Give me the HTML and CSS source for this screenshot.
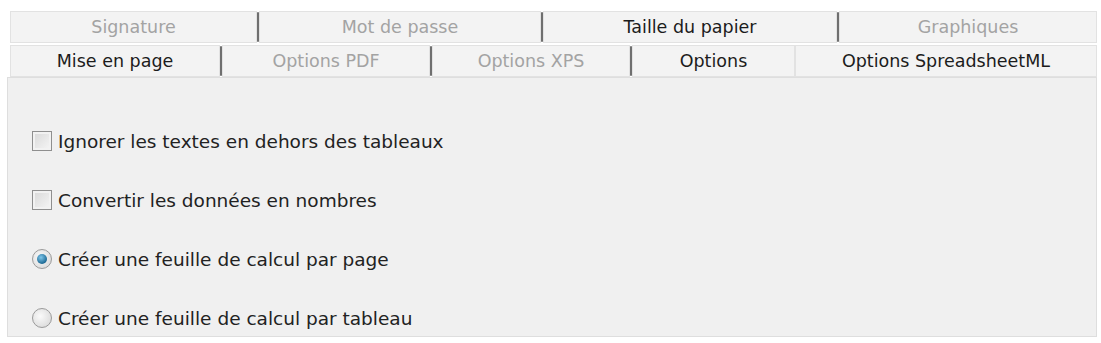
FILE: index.html
```html
<!DOCTYPE html>
<html lang="fr">
<head>
<meta charset="utf-8">
<link rel="stylesheet" href="styles.css">
</head>
<body>
<div class="dialog">
  <div class="tabrow row1">
    <div class="tab dim w-sig">Signature</div>
    <div class="sep"></div>
    <div class="tab dim w-mdp">Mot de passe</div>
    <div class="sep"></div>
    <div class="tab w-tp">Taille du papier</div>
    <div class="sep"></div>
    <div class="tab dim w-gr">Graphiques</div>
  </div>
  <div class="tabrow row2">
    <div class="tab w-mep">Mise en page</div>
    <div class="sep"></div>
    <div class="tab dim w-pdf">Options PDF</div>
    <div class="sep"></div>
    <div class="tab dim w-xps">Options XPS</div>
    <div class="sep"></div>
    <div class="tab w-opt">Options</div>
    <div class="tab w-sml">Options SpreadsheetML</div>
  </div>
  <div class="panel">
    <label class="item"><span class="check"></span><span>Ignorer les textes en dehors des tableaux</span></label>
    <label class="item"><span class="check"></span><span>Convertir les données en nombres</span></label>
    <label class="item"><span class="radio on"></span><span>Créer une feuille de calcul par page</span></label>
    <label class="item"><span class="radio"></span><span>Créer une feuille de calcul par tableau</span></label>
  </div>
</div>
</body>
</html>
```
FILE: styles.css
```css
html, body {
  margin: 0;
  padding: 0;
  background: #ffffff;
}
body {
  font-family: "DejaVu Sans", Verdana, sans-serif;
  font-size: 18.5px;
  color: #222222;
}
.dialog {
  width: 1090px;
  padding: 11px 0 0 7px;
}
.tabrow {
  display: flex;
  align-items: center;
  margin-left: 3px;
  width: 1087px;
  font-size: 17.5px;
}
.row1 { height: 32px; }
.row2 { height: 32px; margin-top: 2px; }
.tab {
  box-sizing: border-box;
  height: 100%;
  display: flex;
  align-items: center;
  justify-content: center;
  background: #f3f3f3;
  border: 1px solid #e2e2e2;
  color: #1c1c1c;
}
.tab.dim { color: #a3a3a3; }
.sep {
  width: 2px;
  height: 30px;
  background: #6f6f6f;
  border-radius: 1px;
  flex: none;
}
.w-sig { width: 247px; }
.w-mdp { width: 282px; }
.w-tp { width: 294px; }
.w-gr { flex: 1; }
.w-mep { width: 210px; }
.w-pdf { width: 208px; }
.w-xps { width: 198px; }
.w-opt { width: 163px; }
.w-sml { flex: 1; }
.panel {
  box-sizing: border-box;
  width: 1090px;
  height: 260px;
  background: #f0f0f0;
  border: 1px solid #dedede;
  display: flex;
  flex-direction: column;
  padding: 52px 0 0 24px;
  gap: 37px;
}
.item {
  display: flex;
  align-items: center;
  gap: 6px;
  height: 22px;
}
.check {
  box-sizing: border-box;
  width: 20px;
  height: 20px;
  border: 1px solid #8f8f8f;
  background: linear-gradient(135deg, #d8d8d8, #f6f6f6);
  box-shadow: inset 0 0 0 2px #f2f2f2;
}
.radio {
  box-sizing: border-box;
  width: 20px;
  height: 20px;
  border-radius: 50%;
  border: 1px solid #9a9a9a;
  background: radial-gradient(circle at 40% 40%, #fafafa, #d4d4d4);
  position: relative;
}
.radio.on::after {
  content: "";
  position: absolute;
  left: 4px;
  top: 4px;
  width: 10px;
  height: 10px;
  border-radius: 50%;
  background: radial-gradient(circle at 40% 35%, #7fc6ea, #1d6a95 70%, #0f4f73);
}
```
